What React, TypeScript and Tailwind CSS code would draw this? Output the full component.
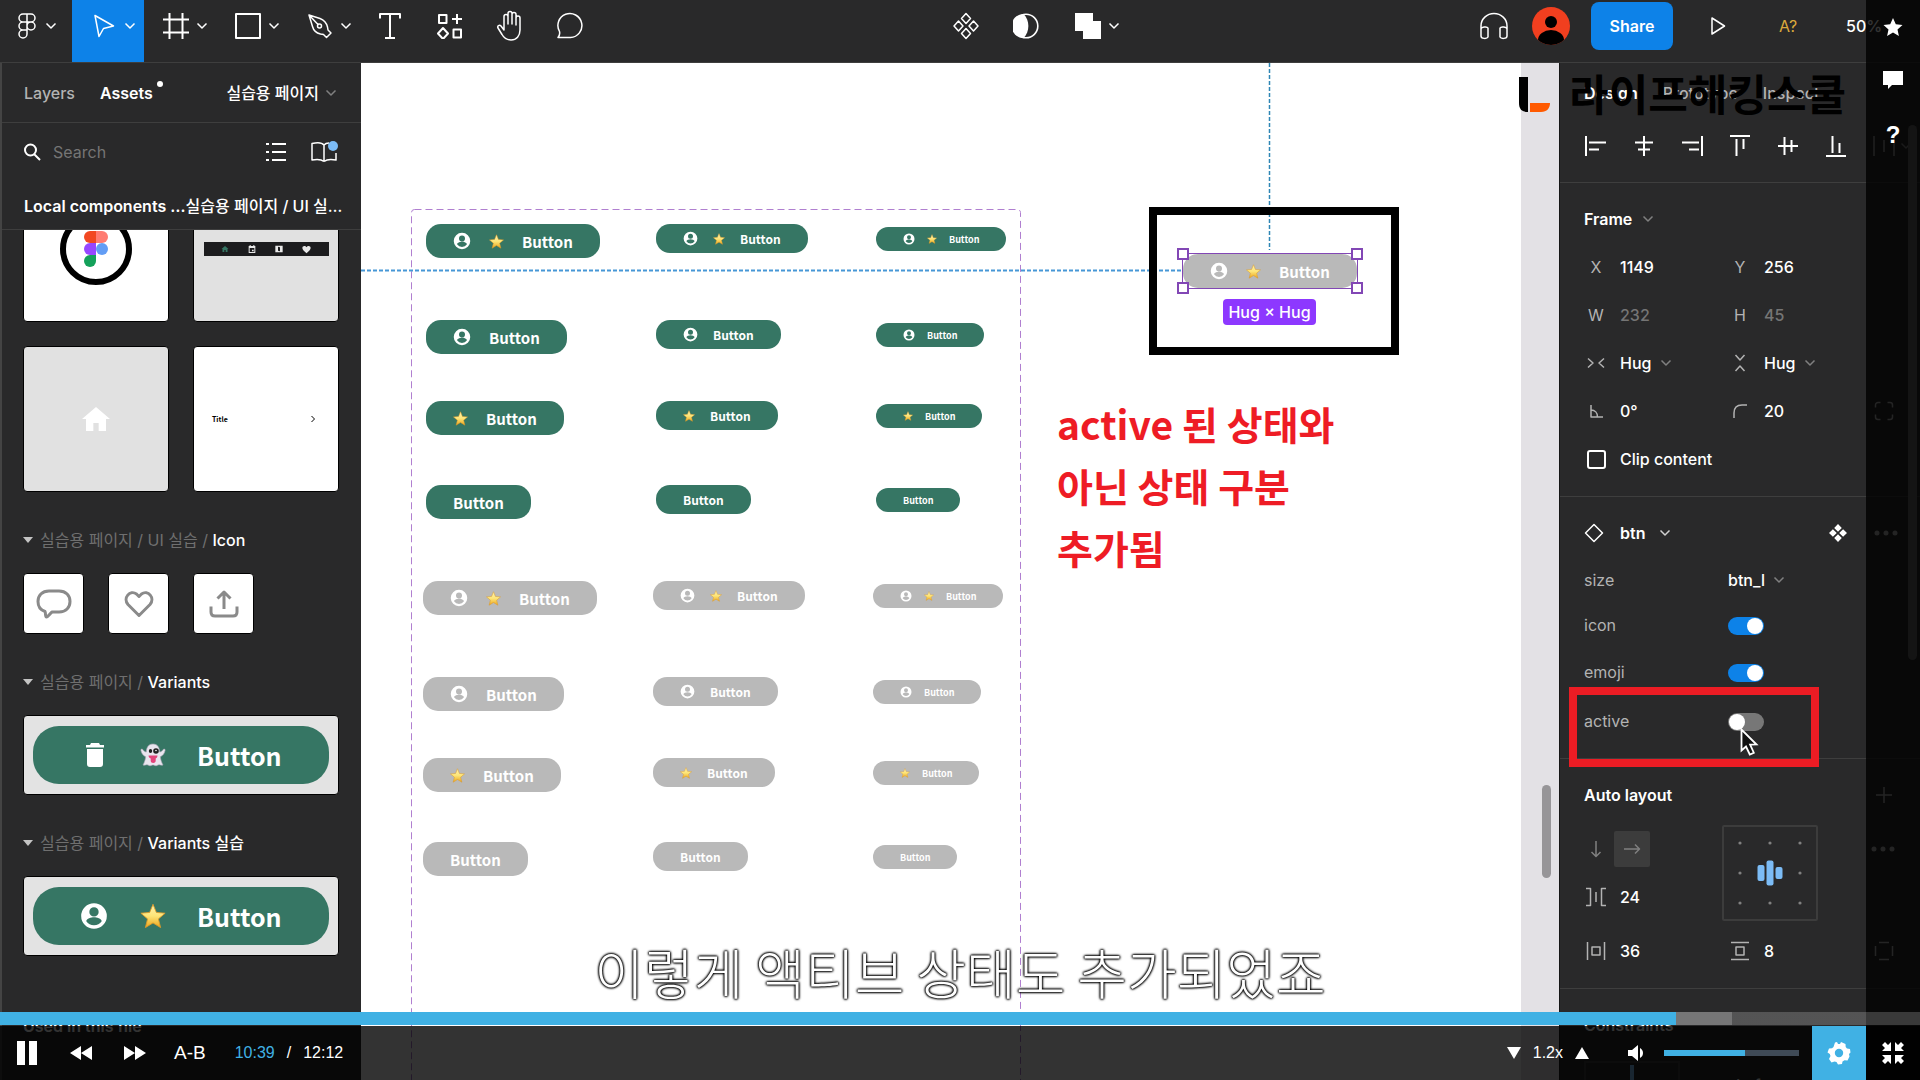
import React from 'react';
import clsx from 'clsx';

type GlyphProps = { w: number; h: number; d: string; sw?: number; fill?: string; className?: string };

const Glyph: React.FC<GlyphProps> = ({ w, h, d, sw = 1.5, fill = 'none', className }) => (
  <svg width={w} height={h} viewBox={`0 0 ${w} ${h}`} fill={fill} stroke={sw ? 'currentColor' : 'none'} strokeWidth={sw} strokeLinejoin="round" className={clsx('shrink-0', className)} aria-hidden="true">
    <path d={d} />
  </svg>
);

const Chevron = ({ className = 'text-[#808080]' }: { className?: string }) => (
  <Glyph w={12} h={8} d="M1.5 1.5 6 6l4.500-4.500" className={className} />
);

const UserIcon = ({ size }: { size: number }) => (
  <svg width={size} height={size} viewBox="0 0 24 24" fill="white" className="shrink-0" aria-hidden="true">
    <path fillRule="evenodd" d="M12 1a11 11 0 1 0 0 22 11 11 0 0 0 0-22Zm0 3.500a4 4 0 1 1 0 8 4 4 0 0 1 0-8Zm0 15.400a8 8 0 0 1-6.600-3.500c0-2.200 4.400-3.400 6.600-3.400s6.600 1.200 6.600 3.400A8 8 0 0 1 12 19.900Z" />
  </svg>
);

const StarIcon = ({ size }: { size: number }) => (
  <svg width={size} height={size} viewBox="0 0 24 24" className="shrink-0" aria-hidden="true">
    <defs>
      <linearGradient id="star" x1="0" y1="0" x2="0" y2="1">
        <stop offset="0" stopColor="#fff3b0" />
        <stop offset="0.5" stopColor="#fde577" />
        <stop offset="1" stopColor="#eda51c" />
      </linearGradient>
    </defs>
    <path d="M12 1.200 15.100 8.700 23.200 9.400 17 14.700 19 22.700 12 18.400 5 22.700 7 14.700.8 9.400 8.900 8.700Z" fill="url(#star)" stroke="#dd9a2a" strokeWidth="0.800" strokeLinejoin="round" />
  </svg>
);

const GhostIcon = () => (
  <svg width="26" height="24" viewBox="0 0 26 24" aria-hidden="true">
    <path d="M13 1c4.500 0 6.500 3.500 6.700 8 1.800 0 2.800-1.600 3.800-2.800.9-.6 1.900.2 1.600 1.300-.7 3.200-2.500 5.300-4.800 6.300.4 3 1.200 5.500 2.700 8.200-1.700.7-3-.3-4-.3-1.200 0-1.800 1.100-3 1.100S14.200 22 13 22s-1.800.8-3 .8S8.200 21.700 7 21.700s-2.300 1-4 .3c1.500-2.700 2.300-5.200 2.700-8.200C3.400 12.800 1.600 10.700.9 7.500.6 6.400 1.600 5.600 2.500 6.200c1 1.200 2 2.800 3.800 2.800C6.500 4.500 8.500 1 13 1Z" fill="#e9e5ee" stroke="#a9a4b5" strokeWidth="0.600" />
    <ellipse cx="10.500" cy="8" rx="1.700" ry="2" fill="#222" />
    <circle cx="16" cy="8" r="2.800" fill="#222" />
    <circle cx="16" cy="7.500" r="0.800" fill="#fff" />
    <path d="M8.500 12.500h9c0 1.600-.8 2.600-1.800 3v2.200c0 3-5 3-5 0v-2.200c-1.200-.4-2.200-1.400-2.200-3Z" fill="#e2447a" />
  </svg>
);

const FigmaMark = () => (
  <svg width="24" height="36" viewBox="0 0 24 36" aria-hidden="true">
    <path d="M12 0H6a6 6 0 0 0 0 12h6z" fill="#f24822" />
    <path d="M12 0h6a6 6 0 0 1 0 12h-6z" fill="#ff7c72" />
    <path d="M12 12H6a6 6 0 0 0 0 12h6z" fill="#9747ff" />
    <circle cx="18" cy="18" r="6" fill="#629df5" />
    <path d="M12 24H6a6 6 0 1 0 6 6z" fill="#14a15a" />
  </svg>
);

const HOME = 'M12 3 1.500 12H4.500v9H10v-6h4v6h5.500v-9h3Z';

/* ---------- toolbar ---------- */

const ToolMenu: React.FC<{ label: string; active?: boolean; tight?: boolean; children: React.ReactNode }> = ({ label, active, tight, children }) => (
  <button aria-label={label} className={clsx('flex h-[62px] w-[72px] items-center pb-[10px]', tight ? 'gap-[6px] pl-[15px]' : 'gap-2 pl-5', active && 'bg-[#0d82e8]')}>
    <span className="flex w-6 justify-center">{children}</span>
    <Chevron className="text-white" />
  </button>
);

const Tool: React.FC<{ label: string; children: React.ReactNode }> = ({ label, children }) => (
  <button aria-label={label} className="flex h-[52px] w-[60px] items-center justify-center">{children}</button>
);

const Toolbar = () => (
  <header className="flex h-[63px] shrink-0 items-start border-b border-[#3e3e3e] text-white">
    <div className="flex">
      <ToolMenu label="Main menu" tight>
        <Glyph w={18} h={26} d="M9 1H5a4 4 0 0 0 0 8h4zM9 1h4a4 4 0 0 1 0 8H9zM9 9H5a4 4 0 0 0 0 8h4zM5 17a4 4 0 1 0 4 4v-4zM13 9a4 4 0 1 1 0 8 4 4 0 0 1 0-8z" />
      </ToolMenu>
      <ToolMenu label="Move" active>
        <Glyph w={22} h={24} d="M2 1.500 20.500 12 10.500 14.500 6 22.500Z" />
      </ToolMenu>
      <ToolMenu label="Frame">
        <Glyph w={26} h={26} d="M6.500 0v26M19.500 0v26M0 6.500h26M0 19.500h26" sw={2} />
      </ToolMenu>
      <ToolMenu label="Rectangle">
        <Glyph w={26} h={26} d="M1 1h24v24H1Z" sw={2} />
      </ToolMenu>
      <ToolMenu label="Pen">
        <Glyph w={26} h={26} d="M2 2l11 3.500c4 1.500 6.500 4.500 7.500 8.500l.5 3 3 3-4.500 4.500-3-3-3-.5c-4-1-7-3.500-8-7.500Zm0 0 9.500 10M12.500 11a2 2 0 1 1 0 4 2 2 0 0 1 0-4Z" />
      </ToolMenu>
      <Tool label="Text">
        <Glyph w={22} h={26} d="M1 5.500V1h20v4.500M11 1v24M6 25h10" sw={2} />
      </Tool>
      <Tool label="Resources">
        <Glyph w={26} h={26} d="M2 2h7.500v8H2ZM16.500 16.500H24v8h-7.500ZM20 1v10M15 6h10M6 15l5 5.500L6 26l-5-5.500Z" sw={2} />
      </Tool>
      <Tool label="Hand">
        <Glyph w={28} h={32} d="M8 17V6.500a2 2 0 0 1 4 0V14 3.500a2 2 0 0 1 4 0V14 4.500a2 2 0 0 1 4 0V15 8a2 2 0 0 1 4 0v12c0 6-3.500 10-9 10-4.500 0-7-2-9-5.500L2 18c-1-2 1.500-3.500 3-2l3 4Z" />
      </Tool>
      <Tool label="Comment">
        <Glyph w={28} h={28} d="M2 25.500c1.800-2.200 2-4 1.500-6A12 12 0 1 1 14.500 25.500Z" />
      </Tool>
    </div>

    <div className="flex flex-1 justify-center">
      <Tool label="Components">
        <Glyph w={28} h={28} d="M14 1.500 18.500 6.500 14 11.500 9.500 6.500ZM14 16.500l4.500 5-4.500 5-4.500-5ZM6.500 9l4.500 5-4.500 5L2 14ZM21.500 9l4.500 5-4.500 5L17 14Z" />
      </Tool>
      <Tool label="Mask">
        <svg width="26" height="26" viewBox="0 0 26 26" aria-hidden="true">
          <circle cx="13" cy="13" r="11.800" fill="none" stroke="white" strokeWidth="1.600" />
          <path d="M10.500 1a12 12 0 1 0 0 24c6.500-6 6.500-18 0-24Z" fill="white" />
        </svg>
      </Tool>
      <ToolMenu label="Boolean groups">
        <Glyph w={26} h={26} d="M0 0h18v8h8v18H8v-8H0Z" sw={0} fill="white" />
      </ToolMenu>
    </div>

    <div className="flex h-[52px] items-center">
      <Tool label="Audio">
        <Glyph w={30} h={28} d="M2 20v-6a13 12.500 0 0 1 26 0v6M2 17c0-2 6-3 7-1v9c-1 2-7 2-7-1ZM28 17c0-2-6-3-7-1v9c1 2 7 2 7-1Z" />
      </Tool>
      <button aria-label="Account" className="ml-2 size-[38px] overflow-hidden rounded-full bg-[#f13f1f]">
        <svg viewBox="0 0 38 38" aria-hidden="true">
          <circle cx="19" cy="15" r="6" />
          <ellipse cx="19" cy="33" rx="13" ry="10" />
        </svg>
      </button>
      <button className="ml-[21px] h-12 w-[82px] rounded-lg bg-[#0d82e8] font-semibold">Share</button>
      <button aria-label="Present" className="flex w-[90px] justify-center">
        <Glyph w={16} h={20} d="M2 2 14.500 10 2 18Z" />
      </button>
      <button className="w-[50px] text-[#dca93c]">A?</button>
      <button className="ml-[33px] w-[74px] text-left font-medium">50%</button>
    </div>
  </header>
);

/* ---------- assets panel ---------- */

const GroupTitle: React.FC<{ path: string; name: string }> = ({ path, name }) => (
  <h3 className="mt-6 mb-[9px] flex h-12 items-center text-[#6f6f6f]">
    <Glyph w={10} h={6} d="M0 0h10L5 6Z" sw={0} fill="#c4c4c4" className="mr-[7px]" />
    <span className="whitespace-pre">{path} </span>
    <span className="font-medium text-white">{name}</span>
  </h3>
);

const VariantCard: React.FC<{ children: React.ReactNode }> = ({ children }) => (
  <div className="rounded-[4px] border border-black bg-[#e3e3e3] px-[9px] py-[10px]">
    <button className="flex h-[58px] w-full items-center rounded-[26px] bg-[#367664] text-white">{children}</button>
  </div>
);

const TILE = 'flex items-center rounded-[4px] border border-black';

const AssetsPanel = () => (
  <aside className="flex w-[361px] shrink-0 flex-col border-l-2 border-[#444] text-white">
    <nav className="flex h-[60px] shrink-0 items-center border-b border-[#3e3e3e] pr-6 pl-[22px]">
      <button className="font-medium text-[#b3b3b3]">Layers</button>
      <button className="ml-[25px] flex font-semibold">
        Assets<span className="ml-1 size-[6px] rounded-full bg-white" />
      </button>
      <button className="ml-auto flex items-center gap-[6px] font-medium">실습용 페이지 <Chevron /></button>
    </nav>
    <div className="flex h-[57px] shrink-0 items-center pr-[23px] pl-[21px]">
      <Glyph w={18} h={18} d="M7.500 1.500a5.500 5.500 0 1 1 0 11 5.500 5.500 0 0 1 0-11ZM11.500 11.500 17 17" sw={2} />
      <input type="text" aria-label="Search assets" placeholder="Search" className="ml-3 w-40 bg-transparent outline-none placeholder:text-[#757575]" />
      <button aria-label="List view" className="ml-auto">
        <Glyph w={20} h={20} d="M0 2h3M6 2h14M0 10h3M6 10h14M0 18h3M6 18h14" sw={2} />
      </button>
      <button aria-label="Libraries" className="relative ml-6">
        <Glyph w={28} h={22} d="M14 4C12 1.500 8 1.200 2 2.500V19c5-1 9-1 12 1.500M14 4v16.500M14 4c1-1.200 2.500-2 5-2M14 20.500c3-2.500 7-2.500 12-1.500v-7" />
        <span className="absolute top-0 right-0 size-[10px] rounded-full bg-[#7cbcf6]" />
      </button>
    </div>
    <div className="flex h-[50px] shrink-0 items-center border-b border-[#3e3e3e] pt-[3px] pl-[22px] whitespace-nowrap">
      <span className="font-semibold">Local components …</span>
      <span className="font-medium">실습용 페이지 / UI 실…</span>
    </div>

    <div className="min-h-0 flex-1 overflow-hidden pr-[22px] pl-[21px]">
      <div className="-mt-[54px] grid grid-cols-2 gap-6">
        <div className={clsx(TILE, 'aspect-square justify-center bg-white')}>
          <div className="flex size-[72px] items-center justify-center rounded-full border-[6px] border-black"><FigmaMark /></div>
        </div>
        <div className={clsx(TILE, 'aspect-square justify-center bg-[#e1e1e1]')}>
          <div className="flex h-[14px] w-[125px] items-center justify-around bg-[#1c1c1e] px-2 text-[#e8e8e8]">
            <svg width="8" height="8" viewBox="0 0 24 24" fill="#367664"><path d={HOME} /></svg>
            <svg width="8" height="8" viewBox="0 0 24 24" fill="currentColor"><path fillRule="evenodd" d="M2 3h3V0h3v3h8V0h3v3h3v21H2Zm3 6v12h14V9Zm7 5h5v5h-5Z" /></svg>
            <svg width="8" height="8" viewBox="0 0 24 24" fill="currentColor"><path fillRule="evenodd" d="M1 2h22v20H1Zm8 3v12l6 2V7Z" /></svg>
            <svg width="9" height="9" viewBox="0 0 24 24" fill="currentColor"><path d="M12 22C4 15 1 12 1 8c0-6 8-7 11-2 3-5 11-4 11 2 0 4-3 7-11 14Z" /></svg>
          </div>
        </div>
        <div className={clsx(TILE, 'aspect-square justify-center bg-[#e1e1e1]')}>
          <svg width="32" height="32" viewBox="0 0 24 24" fill="white" className="shrink-0"><path d={HOME} /></svg>
        </div>
        <div className={clsx(TILE, 'aspect-square justify-between bg-white px-[18px] text-black')}>
          <span className="font-['Noto_Sans_CJK_KR',sans-serif] text-[7px] font-bold">Title</span>
          <Glyph w={6} h={8} d="M1.500 1 4.500 4l-3 3" sw={1} className="mr-1" />
        </div>
      </div>

      <GroupTitle path="실습용 페이지 / UI 실습 /" name="Icon" />
      <div className="flex gap-6 text-[#8a8a8a]">
        <div className={clsx(TILE, 'size-[61px] justify-center bg-white')}>
          <Glyph w={36} h={32} sw={3} d="M13 3h10c7 0 11 4.500 11 10.500S30 24 23 24h-7c-2.500 2-4 5-5.500 5S10 26 9 23.500C4.500 22 2 18 2 13.500 2 7.500 6 3 13 3Z" />
        </div>
        <div className={clsx(TILE, 'size-[61px] justify-center bg-white')}>
          <Glyph w={32} h={28} sw={3} d="M16 25.500 5 14.500C-.5 8 7-.5 13.500 4L16 6.500 18.500 4C25-.5 32.500 8 27 14.500Z" />
        </div>
        <div className={clsx(TILE, 'size-[61px] justify-center bg-white')}>
          <Glyph w={30} h={30} sw={3} d="M15 20V3M8.500 9.500 15 3l6.500 6.500M2 17.500V23c0 2.500 1.500 4 4 4h18c2.500 0 4-1.500 4-4v-5.500" />
        </div>
      </div>

      <GroupTitle path="실습용 페이지 /" name="Variants" />
      <VariantCard>
        <span className="ml-[49px] flex w-[26px] justify-center">
          <Glyph w={20} h={24} d="M6 0h8l1 2h4v2.500H1V2h4ZM2 6h16v15a3 3 0 0 1-3 3H5a3 3 0 0 1-3-3Z" sw={0} fill="white" />
        </span>
        <span className="ml-8"><GhostIcon /></span>
        <span className="ml-[31px] font-['Noto_Sans_CJK_KR',sans-serif] text-[25px] leading-9 font-bold">Button</span>
      </VariantCard>
      <GroupTitle path="실습용 페이지 /" name="Variants 실습" />
      <VariantCard>
        <span className="ml-[47px]"><UserIcon size={28} /></span>
        <span className="ml-8"><StarIcon size={26} /></span>
        <span className="ml-[31px] font-['Noto_Sans_CJK_KR',sans-serif] text-[25px] leading-9 font-bold">Button</span>
      </VariantCard>
      <h3 className="mt-[46px] flex h-12 items-center font-semibold">Used in this file</h3>
    </div>
  </aside>
);

/* ---------- canvas ---------- */

type Size = 'l' | 'm' | 's';

const PILL: Record<Size, string> = {
  l: 'h-[34px] gap-[18px] rounded-[15px] text-[15px]',
  m: 'h-[29px] gap-[15px] rounded-[14px] text-[12px]',
  s: 'h-[24px] gap-[12px] rounded-[12px] text-[9px]',
};
const ICON: Record<Size, number> = { l: 18, m: 15, s: 12 };
const STAR: Record<Size, number> = { l: 15, m: 12, s: 10 };

const Pill: React.FC<{ size: Size; icon?: boolean; emoji?: boolean; active?: boolean }> = ({ size, icon, emoji, active }) => (
  <button className={clsx("flex items-center px-[27px] font-['Noto_Sans_CJK_KR',sans-serif] leading-none font-bold text-white", PILL[size], active ? 'bg-[#367664]' : 'bg-[#b9b9b9]')}>
    {icon && <UserIcon size={ICON[size]} />}
    {emoji && <StarIcon size={STAR[size]} />}
    <span>Button</span>
  </button>
);

const COLUMNS: { size: Size; x: number; dy: number }[] = [
  { size: 'l', x: 65, dy: 0 },
  { size: 'm', x: 295, dy: 0 },
  { size: 's', x: 515, dy: 3 },
];

const ROWS = [
  { y: 161, icon: true, emoji: true },
  { y: 257, icon: true, emoji: false },
  { y: 338, icon: false, emoji: true },
  { y: 422, icon: false, emoji: false },
];

const SETS = [
  { active: true, dx: 0, dy: 0 },
  { active: false, dx: -3, dy: 357 },
];

const HANDLE = 'absolute size-3 border-2 border-[#8247b5] bg-white';

const Canvas = () => (
  <main className="relative min-w-0 flex-1 overflow-hidden bg-white">
    <svg className="absolute inset-0 h-full w-full" fill="none" aria-hidden="true">
      <rect x="50.500" y="146.500" width="609" height="1200" rx="3" stroke="#b07fd0" strokeDasharray="7 4" />
      <path d="M0 207.500h820" stroke="#4797d6" strokeWidth="2" strokeDasharray="4 2" />
      <path d="M908.500 0v187" stroke="#2f86b5" strokeWidth="1.500" strokeDasharray="4 2" />
    </svg>

    {SETS.map((set) =>
      ROWS.map((row) =>
        COLUMNS.map((col) => (
          <div key={`${set.active}-${row.y}-${col.size}`} className="absolute" style={{ left: col.x + set.dx, top: row.y + col.dy + set.dy }}>
            <Pill size={col.size} icon={row.icon} emoji={row.emoji} active={set.active} />
          </div>
        ))
      )
    )}

    <div className="absolute top-[144px] left-[788px] h-[148px] w-[250px] border-8 border-black" />
    <div className="absolute top-[191px] left-[822px]">
      <Pill size="l" icon emoji />
      <div className="absolute -inset-px border border-[#8247b5]" />
      <span className={clsx(HANDLE, '-top-[6px] -left-[6px]')} />
      <span className={clsx(HANDLE, '-top-[6px] -right-[6px]')} />
      <span className={clsx(HANDLE, '-bottom-[6px] -left-[6px]')} />
      <span className={clsx(HANDLE, '-right-[6px] -bottom-[6px]')} />
    </div>
    <span className="absolute top-[236px] left-[862px] flex h-[26px] w-[93px] items-center justify-center rounded-[4px] bg-[#8d38ff] font-medium whitespace-nowrap text-white">Hug × Hug</span>

    <p className="absolute top-[329px] left-[696px] font-['Noto_Sans_CJK_KR',sans-serif] text-[39px] leading-[62px] font-bold whitespace-nowrap text-[#ee1c25]">
      active 된 상태와<br />아닌 상태 구분<br />추가됨
    </p>

    <div className="absolute inset-y-0 right-0 w-[38px] bg-[#e3e1e5]">
      <div className="absolute top-[722px] right-2 h-[93px] w-[9px] rounded-full bg-[#979598]" />
    </div>
  </main>
);

/* ---------- design panel ---------- */

const GRID = 'grid h-12 grid-cols-[144px_144px_1fr] items-center';

const Field: React.FC<{ label: string; value: string; mark: React.ReactNode; muted?: boolean }> = ({ label, value, mark, muted }) => (
  <label className="flex items-center gap-3">
    <span className="flex w-6 justify-center text-[#b3b3b3]">{mark}</span>
    <input type="text" aria-label={label} defaultValue={value} className={clsx('w-20 bg-transparent font-medium outline-none', muted ? 'text-[#757575]' : 'text-white')} />
  </label>
);

const Choice: React.FC<{ label: string; value: string }> = ({ label, value }) => (
  <span className="flex items-center gap-2">
    <select aria-label={label} className="appearance-none bg-transparent font-medium text-white outline-none">
      <option>{value}</option>
    </select>
    <Chevron />
  </span>
);

const PropToggle: React.FC<{ name: string; on?: boolean; className: string }> = ({ name, on, className }) => (
  <label className={clsx('grid grid-cols-[144px_1fr] items-center text-[#b3b3b3]', className)}>
    <span>{name}</span>
    <input
      type="checkbox"
      role="switch"
      defaultChecked={on}
      className="mt-[2px] h-[18px] w-9 appearance-none rounded-full bg-[#777] p-px before:block before:size-4 before:rounded-full before:bg-white checked:bg-[#0d82e8] checked:before:ml-[18px]"
    />
  </label>
);

const Dots = () => <Glyph w={24} h={6} d="M3 .5a2.500 2.500 0 1 1 0 5 2.500 2.500 0 0 1 0-5ZM12 .5a2.500 2.500 0 1 1 0 5 2.500 2.500 0 0 1 0-5ZM21 .5a2.500 2.500 0 1 1 0 5 2.500 2.500 0 0 1 0-5Z" sw={0} fill="#b3b3b3" />;

const ALIGN = [
  { name: 'Align left', d: 'M2 2v20M5 8.500h17M5 15.500h10' },
  { name: 'Align horizontal centers', d: 'M12 2v20M3 8.500h18M6 15.500h12' },
  { name: 'Align right', d: 'M22 2v20M19 8.500H2M19 15.500H9' },
  { name: 'Align top', d: 'M2 2h20M8.500 5v17M15.500 5v10' },
  { name: 'Align vertical centers', d: 'M2 12h20M8.500 3v18M15.500 6v12' },
  { name: 'Align bottom', d: 'M2 22h20M8.500 19V2M15.500 19V9' },
];

const SECTION = 'border-b border-[#3e3e3e] pt-3 pb-[13px] pl-6';

const DesignPanel = () => (
  <aside className="w-[361px] shrink-0 overflow-hidden border-l border-[#161616] text-white">
    <nav className="flex h-[59px] items-center pl-6 font-medium text-[#b3b3b3]">
      <button className="font-semibold text-white">Design</button>
      <button className="ml-[25px]">Prototype</button>
      <button className="ml-[25px]">Inspect</button>
    </nav>
    <div className="flex h-[61px] items-start gap-6 border-b border-[#3e3e3e] pt-3 pl-6">
      {ALIGN.map((a) => (
        <button key={a.name} aria-label={a.name}><Glyph w={24} h={24} d={a.d} sw={2} /></button>
      ))}
      <button aria-label="Distribute" className="flex items-center gap-1 text-[#808080]">
        <Glyph w={24} h={24} d="M2 2v20M22 2v20M12 6v12" sw={2} /><Chevron />
      </button>
    </div>

    <section className={SECTION}>
      <h2 className="flex h-12 items-center gap-[10px] font-semibold">Frame <Chevron /></h2>
      <div className={GRID}>
        <Field label="X position" value="1149" mark="X" />
        <Field label="Y position" value="256" mark="Y" />
      </div>
      <div className={GRID}>
        <Field label="Width" value="232" mark="W" muted />
        <Field label="Height" value="45" mark="H" muted />
      </div>
      <div className={GRID}>
        <div className="flex items-center gap-3 text-[#b3b3b3]">
          <span className="flex w-6 justify-center"><Glyph w={18} h={12} d="M1 1.500 6 6l-5 4.500M17 1.500 12 6l5 4.500" /></span>
          <Choice label="Horizontal resizing" value="Hug" />
        </div>
        <div className="flex items-center gap-3 text-[#b3b3b3]">
          <span className="flex w-6 justify-center"><Glyph w={12} h={18} d="M1.500 1 6 6l4.500-5M1.500 17 6 12l4.500 5" /></span>
          <Choice label="Vertical resizing" value="Hug" />
        </div>
      </div>
      <div className={GRID}>
        <Field label="Rotation" value="0°" mark={<Glyph w={14} h={14} d="M2 1v12h12M2 6c4 0 6.500 3 6.500 7" />} />
        <Field label="Corner radius" value="20" mark={<Glyph w={16} h={16} d="M2 15V10c0-5 3-8 8-8h5" />} />
        <button aria-label="Independent corners" className="flex w-6 justify-center text-[#b3b3b3]">
          <Glyph w={20} h={20} d="M1.500 6.500V4a2.500 2.500 0 0 1 2.500-2.500h2.500M13.500 1.500H16A2.500 2.500 0 0 1 18.500 4v2.500M18.500 13.500V16a2.500 2.500 0 0 1-2.500 2.500h-2.500M6.500 18.500H4A2.500 2.500 0 0 1 1.500 16v-2.500" />
        </button>
      </div>
      <label className="flex h-12 items-center gap-3 font-medium">
        <span className="flex w-6 justify-center">
          <input type="checkbox" className="size-[19px] appearance-none rounded-[3px] border-2 border-white checked:bg-white" />
        </span>
        Clip content
      </label>
    </section>

    <section className={SECTION}>
      <div className="flex h-12 items-center">
        <Glyph w={20} h={20} d="M10 1.500 18.500 10 10 18.500 1.500 10Z" />
        <h2 className="mr-[14px] ml-4 font-semibold">btn</h2>
        <Chevron className="text-[#d0d0d0]" />
        <button aria-label="Swap instance" className="ml-auto">
          <Glyph w={18} h={18} d="M9 0l3.800 3.900L9 7.800 5.200 3.900ZM9 10.200l3.800 3.900L9 18l-3.800-3.900ZM3.900 5.200 7.800 9l-3.900 3.800L0 9ZM14.100 5.200 18 9l-3.900 3.800L10.200 9Z" sw={0} fill="white" />
        </button>
        <button aria-label="More" className="mr-[22px] ml-[27px]"><Dots /></button>
      </div>
      <div className="grid h-[45px] grid-cols-[144px_1fr] items-center">
        <span className="text-[#b3b3b3]">size</span>
        <Choice label="size" value="btn_l" />
      </div>
      <PropToggle name="icon" on className="h-[46px]" />
      <PropToggle name="emoji" on className="h-12" />
      <PropToggle name="active" className="h-[49px]" />
    </section>

    <section className={SECTION}>
      <div className="flex h-12 items-center justify-between pr-[27px]">
        <h2 className="font-semibold">Auto layout</h2>
        <button aria-label="Add auto layout"><Glyph w={18} h={18} d="M9 1v16M1 9h16" className="text-[#b3b3b3]" /></button>
      </div>
      <div className="mt-[6px] flex text-[#b3b3b3]">
        <div className="w-[138px]">
          <div className="flex h-12 items-center gap-[6px]">
            <button aria-label="Vertical" className="flex w-6 justify-center text-[#808080]"><Glyph w={12} h={18} d="M6 1v15.500M1.500 12 6 16.500l4.500-4.500" /></button>
            <button aria-label="Horizontal" className="flex size-9 items-center justify-center rounded-[2px] bg-[#3c3c3c] text-[#808080]"><Glyph w={18} h={12} d="M1 6h15.500M12 1.500 16.500 6 12 10.500" /></button>
          </div>
          <div className="flex h-12 items-center">
            <Field label="Spacing" value="24" mark={<Glyph w={20} h={20} d="M0 1.500h4.500v17H0M20 1.500h-4.500v17H20M10 5v10" />} />
          </div>
        </div>
        <button aria-label="Alignment" className="h-24 w-24 rounded-[2px] border-2 border-[#3c3c3c]">
          <svg viewBox="0 0 92 92" aria-hidden="true">
            {[16, 46, 76].map((y) => [16, 46, 76].map((x) => (x === 46 && y === 46 ? null : <circle key={`${x}-${y}`} cx={x} cy={y} r="1.600" fill="#808080" />)))}
            <rect x="33.500" y="38" width="7" height="16" rx="2" fill="#7cbcf6" />
            <rect x="42.500" y="33.500" width="7" height="25" rx="2" fill="#7cbcf6" />
            <rect x="51.500" y="40" width="7" height="12" rx="2" fill="#7cbcf6" />
          </svg>
        </button>
        <button aria-label="Advanced layout" className="ml-[53px] flex h-12 items-center"><Dots /></button>
      </div>
      <div className={clsx(GRID, 'mt-[6px]')}>
        <Field label="Horizontal padding" value="36" mark={<Glyph w={20} h={20} d="M1.500 1v18M18.500 1v18M6 6h8v8H6Z" />} />
        <Field label="Vertical padding" value="8" mark={<Glyph w={20} h={20} d="M1 1.500h18M1 18.500h18M6 6h8v8H6Z" />} />
        <button aria-label="Individual padding" className="flex w-6 justify-center text-[#b3b3b3]">
          <Glyph w={20} h={20} d="M5 1.500h10M5 18.500h10M1.500 5v10M18.500 5v10" />
        </button>
      </div>
    </section>

    <section className="pt-3 pl-6">
      <h2 className="flex h-12 items-center font-semibold">Constraints</h2>
      <div className="mt-3 flex gap-14">
        <div className="flex h-24 w-24 justify-center border-2 border-[#3c3c3c]"><span className="mt-[2px] h-4 w-1 bg-[#7cbcf6]" /></div>
        <span className="pt-3 font-medium">Left</span>
      </div>
    </section>
  </aside>
);

/* ---------- video player chrome ---------- */

const SideRail = () => (
  <div className="absolute inset-y-0 right-0 flex w-[54px] flex-col bg-black/80 text-white">
    <button aria-label="Bookmark" className="flex h-[53px] items-center justify-center">
      <Glyph w={20} h={20} d="M10 1l2.800 6.200 6.700.7-5 4.500 1.400 6.600L10 15.600 4.100 19l1.400-6.600-5-4.500 6.700-.7Z" sw={0} fill="white" />
    </button>
    <button aria-label="Notes" className="flex h-[53px] items-center justify-center">
      <Glyph w={20} h={18} d="M0 0h20v14H9l-4 4v-4H0Z" sw={0} fill="white" />
    </button>
    <button aria-label="Help" className="flex h-[58px] items-center justify-center font-['Liberation_Sans',sans-serif] text-2xl font-bold">?</button>
    <div className="absolute top-[125px] right-[3px] h-[535px] w-[9px] rounded-full bg-[#141414]" />
  </div>
);

const RANGE = 'block appearance-none outline-none [&::-webkit-slider-thumb]:h-0 [&::-webkit-slider-thumb]:w-0 [&::-webkit-slider-thumb]:appearance-none';

const PlayerBar = () => (
  <footer className="absolute inset-x-0 bottom-0 font-['Liberation_Sans',sans-serif] text-white">
    <input
      type="range"
      aria-label="Seek"
      defaultValue={87}
      className={clsx(RANGE, 'h-[13px] w-full bg-[linear-gradient(to_right,#40b1e4_87.3%,rgba(255,255,255,0.36)_87.3%,rgba(255,255,255,0.36)_90.2%,rgba(255,255,255,0.2)_90.2%)]')}
    />
    <div className="mt-px flex h-[54px] items-center bg-black/80">
      <button aria-label="Pause" className="ml-[17px]"><Glyph w={20} h={24} d="M0 0h8v24H0ZM12 0h8v24h-8Z" sw={0} fill="white" /></button>
      <button aria-label="Rewind" className="ml-[33px]"><Glyph w={22} h={14} d="M11 0v14L0 7ZM22 0v14L11 7Z" sw={0} fill="white" /></button>
      <button aria-label="Fast forward" className="ml-8"><Glyph w={22} h={14} d="M0 0l11 7-11 7ZM11 0l11 7-11 7Z" sw={0} fill="white" /></button>
      <button className="ml-7 text-[19px]">A-B</button>
      <span className="ml-[29px] text-base text-[#40b1e4]">10:39</span>
      <span className="mx-3 text-base">/</span>
      <span className="text-base">12:12</span>
      <div className="ml-auto flex h-full items-center">
        <button aria-label="Slower"><Glyph w={14} h={12} d="M0 0h14L7 12Z" sw={0} fill="white" /></button>
        <span className="mx-3 text-base">1.2x</span>
        <button aria-label="Faster"><Glyph w={14} h={12} d="M7 0l7 12H0Z" sw={0} fill="white" /></button>
        <button aria-label="Mute" className="ml-[39px]"><Glyph w={16} h={16} d="M0 5h4l6-5v16l-6-5H0ZM12 3c4 2 4 8 0 10Z" sw={0} fill="white" /></button>
        <input type="range" aria-label="Volume" defaultValue={60} className={clsx(RANGE, 'mr-[13px] ml-5 h-[6px] w-[135px] bg-[linear-gradient(to_right,#40b1e4_60%,#3f4a56_60%)]')} />
        <button aria-label="Settings" className="flex h-full w-[54px] items-center justify-center bg-[#40b1e4]">
          <svg width="24" height="24" viewBox="0 0 24 24" fill="white" aria-hidden="true">
            <path fillRule="evenodd" d="M8 1.500 10 1l1 2h2l1-2 4.500 2 .2 3 1.300 1.500 3 .5.5 3.500L22 13l.5 2.500-2 4-3-.2L15.500 20.500 15 23l-4 .5-1.500-2.500-2-.5-3 1-2.500-3.500L3.500 15 2.800 13 .5 11.500 2 7.500l3-.3L6.500 6ZM12 7.800a4.200 4.200 0 1 0 0 8.400 4.200 4.200 0 0 0 0-8.400Z" />
          </svg>
        </button>
        <button aria-label="Exit full screen" className="flex h-full w-[54px] items-center justify-center">
          <Glyph w={22} h={22} d="M9 0v9H0l3-3L0 3l3-3 3 3ZM13 0v9h9l-3-3 3-3-3-3-3 3ZM9 22v-9H0l3 3-3 3 3 3 3-3ZM13 22v-9h9l-3 3 3 3-3 3-3-3Z" sw={0} fill="white" />
        </button>
      </div>
    </div>
  </footer>
);

const App: React.FC = () => (
  <div className="relative flex h-screen w-full flex-col overflow-hidden bg-[#29292a] font-['Inter','Noto_Sans_CJK_KR',sans-serif] text-base leading-6">
    <Toolbar />
    <div className="flex min-h-0 flex-1">
      <AssetsPanel />
      <Canvas />
      <DesignPanel />
    </div>

    {/* channel watermark */}
    <div className="absolute top-[65px] right-[74px] flex items-start gap-[18px]">
      <svg width="32" height="36" viewBox="0 0 32 36" className="mt-3" aria-hidden="true">
        <path d="M0 0h9v35C3 35 0 32 0 26Z" />
        <path d="M11 26h20c0 5-3 9-9 9H11Z" fill="#ff5a00" />
      </svg>
      <span className="font-['Noto_Sans_CJK_KR',sans-serif] text-[43px] leading-[54px] font-bold whitespace-nowrap text-black">라이프해킹스쿨</span>
    </div>

    {/* highlight around the active property */}
    <div className="absolute top-[687px] right-[101px] h-20 w-[250px] border-8 border-[#ec1c24]" />
    <svg className="absolute top-[728px] right-[161px]" width="19" height="28" viewBox="0 0 19 28" aria-hidden="true">
      <path d="M1.500 1.500v21l4.500-4 3.800 8 4-1.800-3.700-8 6.400-.2Z" fill="#111" stroke="white" strokeWidth="1.800" />
    </svg>

    <SideRail />
    <p className="absolute inset-x-0 bottom-[72px] text-center font-['Noto_Sans_CJK_KR',sans-serif] text-[54px] leading-[72px] font-light text-white [text-shadow:0_0_2px_#000,0_0_2px_#000,0_0_3px_#000,0_0_3px_#000]">이렇게 액티브 상태도 추가되었죠</p>
    <PlayerBar />
  </div>
);

export default App;
